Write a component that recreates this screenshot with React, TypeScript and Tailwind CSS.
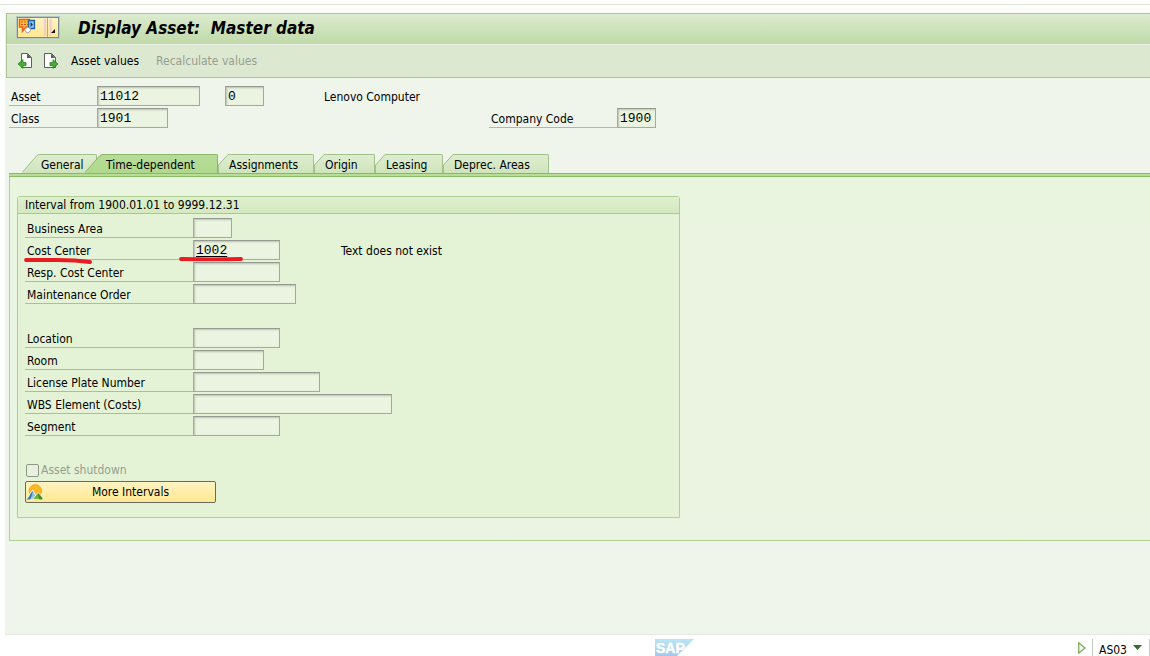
import React from "react";

type Field = { id: string; label: string; width: string; value?: string; note?: string };

const intervalFields: Field[] = [
  { id: "business-area", label: "Business Area", width: "w-[39px]" },
  { id: "cost-center", label: "Cost Center", width: "w-[87px]", value: "1002", note: "Text does not exist" },
  { id: "resp-cost-center", label: "Resp. Cost Center", width: "w-[87px]" },
  { id: "maintenance-order", label: "Maintenance Order", width: "w-[103px]" },
];

const locationFields: Field[] = [
  { id: "location", label: "Location", width: "w-[87px]" },
  { id: "room", label: "Room", width: "w-[71px]" },
  { id: "license-plate", label: "License Plate Number", width: "w-[127px]" },
  { id: "wbs-element", label: "WBS Element (Costs)", width: "w-[199px]" },
  { id: "segment", label: "Segment", width: "w-[87px]" },
];

const inputClass =
  "h-5 shrink-0 border border-[#a3aa9e] border-t-[#969b92] bg-[#eaf4e0] px-[2px] font-['Liberation_Mono',monospace] text-[13px] leading-4 text-black outline-none shadow-[inset_1px_1px_2px_#b9c0b2]";

function TabEdge({ kind }: { kind: "first" | "active" | "plain" }) {
  if (kind === "plain") {
    return (
      <svg className="block h-[19px] w-[11px] shrink-0" viewBox="0 0 11 19" aria-hidden="true">
        <path d="M0 11 L10 0 H11 V19 H0Z" fill="url(#tab-plain)" />
        <path d="M0.5 19 V11 L10 0.5 H11" fill="none" stroke="#a3c18a" />
      </svg>
    );
  }
  const active = kind === "active";
  return (
    <svg className="block h-[19px] w-[19px] shrink-0" viewBox="0 0 19 19" aria-hidden="true">
      <path d="M0 19 L15 1 L18 0 H19 V19Z" fill={active ? "url(#tab-active)" : "url(#tab-plain)"} />
      <path d="M0 18.5 L14.5 2 Q16 0.5 18 0.5 H19" fill="none" stroke={active ? "#8bb768" : "#a3c18a"} />
    </svg>
  );
}

function Tab({ label, kind, className }: { label: string; kind: "first" | "active" | "plain"; className: string }) {
  const active = kind === "active";
  return (
    <button type="button" role="tab" aria-selected={active} className={`flex h-[19px] ${className}`}>
      <TabEdge kind={kind} />
      <span
        className={`h-[19px] flex-1 rounded-tr-[2px] border-t border-r text-left leading-[20px] whitespace-nowrap ${
          active
            ? "border-[#8bb768] bg-linear-to-b from-[#b7dc98] to-[#afd98d] pl-[2px]"
            : "border-[#a3c18a] bg-linear-to-b from-[#deeed0] to-[#cfe4bb]"
        }`}
      >
        {label}
      </span>
    </button>
  );
}

function FieldRow({ field }: { field: Field }) {
  return (
    <div className="relative flex h-[22px] items-start">
      <label htmlFor={field.id} className="h-5 w-[168px] shrink-0 border-b border-[#b0b9a8] pl-[2px] leading-[23px]">
        {field.label}
      </label>
      <input
        id={field.id}
        readOnly
        defaultValue={field.value ?? ""}
        className={`${inputClass} ${field.width} ${field.value ? "underline underline-offset-2" : ""}`}
      />
      {field.note && <span className="ml-[61px] leading-[23px]">{field.note}</span>}
      {field.value && (
        <svg className="pointer-events-none absolute top-4 left-[-2px] h-2 w-[222px]" viewBox="0 0 222 8" aria-hidden="true">
          <path d="M3 4 Q18 4 35 4 T67 6" fill="none" stroke="#e81c22" strokeWidth="3.8" strokeLinecap="round" />
          <path d="M158 3 Q190 3.6 218 3" fill="none" stroke="#e81c22" strokeWidth="3.8" strokeLinecap="round" />
        </svg>
      )}
    </div>
  );
}

function PageIcon({ next }: { next?: boolean }) {
  return (
    <svg className="block h-4 w-4" viewBox="0 0 16 16" aria-hidden="true">
      <path d={next ? "M1.5 .5H8.5L12.5 4.5V14.5H1.5Z" : "M4.5 .5H10.5L14.5 4.5V14.5H4.5Z"} fill="#fff" stroke="#5c5f5c" />
      <path d={next ? "M8 .5V5H12.5Z" : "M10 .5V5H14.5Z"} fill="#5c5f5c" />
      <path
        d={next ? "M7 9.5H10V6.7L15 11L10 15.3V12.7H7Z" : "M9 9.5H6V6.7L1 11L6 15.3V12.7H9Z"}
        fill="#45ae35"
        stroke="#2c7d22"
        strokeWidth=".8"
      />
    </svg>
  );
}

export default function App() {
  return (
    <div className="flex min-h-screen flex-col bg-white font-['DejaVu_Sans_Condensed','Noto_Sans',sans-serif] text-[12px] text-black">
      <svg className="absolute h-0 w-0" aria-hidden="true">
        <defs>
          <linearGradient id="tab-plain" x1="0" y1="0" x2="0" y2="1">
            <stop offset="0" stopColor="#deeed0" />
            <stop offset="1" stopColor="#cfe4bb" />
          </linearGradient>
          <linearGradient id="tab-active" x1="0" y1="0" x2="0" y2="1">
            <stop offset="0" stopColor="#b7dc98" />
            <stop offset="1" stopColor="#afd98d" />
          </linearGradient>
        </defs>
      </svg>
      <div className="mt-1 h-[9px] border-t border-[#dfe9da] bg-linear-to-b from-white to-[#f7faf5]" />

      <div className="ml-[5px] flex flex-1 flex-col border-b border-[#e3ebde] bg-[#eff5eb]">
        <header className="ml-px flex h-[31px] items-center border-t border-l border-[#a9c497] bg-linear-to-b from-[#dcebcf] to-[#c0d9a9] pb-[3px] pl-[10px]">
          <button
            type="button"
            aria-label="Services for object"
            className="flex h-[21px] w-[42px] border border-[#7d8794] bg-linear-to-b from-[#fff3c4] to-[#ffe88f] outline outline-[#b5c9c6]"
          >
            <svg className="block h-[19px] w-10" viewBox="0 0 40 19" aria-hidden="true">
              <path d="M1.5 1.5H11.5V9H8L4.5 13V9H1.5Z" fill="#ffc23a" stroke="#e8641b" strokeWidth="1.6" />
              <path d="M3 4H10M3 6.5H10" stroke="#d9531a" strokeDasharray="2 1" />
              <path d="M10.5 2.5H16.5V10.5H10.5Z" fill="#8fc8ef" stroke="#23629d" strokeWidth="1.3" />
              <path d="M12.5 4L15 6.5L12.5 9Z" fill="#123b68" />
              <path d="M6.5 12L9.5 9L13 11L11.5 14L9 15Z" fill="#fff" stroke="#8994a0" strokeWidth=".8" />
              <path d="M27 1V18M32.5 1V18" stroke="#f4c7d4" strokeWidth="2" />
              <path d="M29.5 0V19" stroke="#b9a67c" />
              <path d="M37 11V15H33Z" fill="#111" />
            </svg>
          </button>
          <h1 className="ml-[19px] text-[17px] leading-5 font-bold whitespace-pre italic">Display Asset:  Master data</h1>
        </header>

        <div className="ml-px flex h-[34px] items-center border-t border-b border-l border-[#a9c497] border-t-[#edf4e7] bg-[#dde8d0] pl-[10px]">
          <button type="button" aria-label="Previous asset" className="pb-px"><PageIcon /></button>
          <button type="button" aria-label="Next asset" className="ml-[10px] pb-px"><PageIcon next /></button>
          <button type="button" className="ml-[12px]">Asset values</button>
          <button type="button" disabled className="ml-[17px] text-[#969e90]">Recalculate values</button>
        </div>

        <section className="mt-2 ml-1">
          <div className="flex h-[22px] items-start">
            <label htmlFor="asset" className="h-5 w-[88px] border-b border-[#b0b9a8] pl-[2px] leading-[23px]">Asset</label>
            <input id="asset" readOnly defaultValue="11012" className={`${inputClass} w-[103px]`} />
            <input aria-label="Asset subnumber" readOnly defaultValue="0" className={`${inputClass} ml-[25px] w-[39px]`} />
            <span className="ml-[60px] leading-[23px]">Lenovo Computer</span>
          </div>
          <div className="flex h-[22px] items-start">
            <label htmlFor="class" className="h-5 w-[88px] border-b border-[#b0b9a8] pl-[2px] leading-[23px]">Class</label>
            <input id="class" readOnly defaultValue="1901" className={`${inputClass} w-[71px]`} />
            <label htmlFor="company" className="ml-[321px] h-5 w-32 border-b border-[#b0b9a8] pl-[2px] leading-[23px]">Company Code</label>
            <input id="company" readOnly defaultValue="1900" className={`${inputClass} w-[39px]`} />
          </div>
        </section>

        <section className="mt-6 ml-1">
          <div role="tablist" className="flex pl-[13px]">
            <Tab label="General" kind="first" className="w-[75px]" />
            <Tab label="Time-dependent" kind="active" className="z-10 -ml-[12px] w-[133px]" />
            <Tab label="Assignments" kind="plain" className="w-[96px]" />
            <Tab label="Origin" kind="plain" className="w-[61px]" />
            <Tab label="Leasing" kind="plain" className="w-[68px]" />
            <Tab label="Deprec. Areas" kind="plain" className="w-[106px]" />
          </div>
          <div className="h-1 border-t border-b border-[#8bb768] bg-[#b7dd98]" />
          <div className="border-b border-l border-[#afd093] bg-linear-to-b from-[#eaf5e0] to-[#ebf4e2] pt-[19px] pb-[22px] pl-[7px]">
            <fieldset className="w-[663px] max-w-full rounded-t-[3px] border border-[#afd093] bg-[#e4f3d6] pb-[14px]">
              <h2 className="h-[17px] border-b border-[#a8cb8a] bg-linear-to-b from-[#dfefd1] to-[#d3e9be] pl-[7px] leading-4">
                Interval from 1900.01.01 to 9999.12.31
              </h2>
              <div className="pt-1 pl-[7px]">
                {intervalFields.map((f) => <FieldRow key={f.id} field={f} />)}
                <div className="mt-[22px]">
                  {locationFields.map((f) => <FieldRow key={f.id} field={f} />)}
                </div>
                <label className="mt-[22px] flex h-5 items-center text-[#969e90]">
                  <input type="checkbox" disabled className="mr-[2px] ml-px h-[13px] w-[13px] appearance-none rounded-[2px] border border-[#8e978a] bg-[#e8f1df]" />
                  Asset shutdown
                </label>
                <button
                  type="button"
                  className="mt-px flex h-[22px] w-[191px] items-center rounded-[2px] border border-[#6b6a5e] bg-linear-to-b from-[#fff3c3] to-[#ffe88f]"
                >
                  <svg className="block h-4 w-[17px] shrink-0" viewBox="0 0 17 16" aria-hidden="true">
                    <circle cx="9.3" cy="6.8" r="6.2" fill="#ffb81e" stroke="#f59a1c" strokeWidth=".8" />
                    <path d="M0 15.4C2 15 4 8 6.8 6L11.5 15.4Z" fill="#8fc3e6" stroke="#fff" strokeWidth=".8" />
                    <path d="M.5 15.4C3 14.5 4.6 9 6.8 7L6 11L4.2 15.4Z" fill="#3a78ad" />
                    <path d="M6.5 15.4L12 8.3L16.6 13.5V15.4Z" fill="#69b42d" stroke="#fff" strokeWidth=".8" />
                    <path d="M12 9L16.4 14V15.4H13.2Z" fill="#3f8c28" />
                  </svg>
                  <span className="flex-1 pl-[3px] text-center">More Intervals</span>
                </button>
              </div>
            </fieldset>
          </div>
        </section>
      </div>

      <footer className="flex h-[21px] shrink-0 items-end">
        <div className="flex-1" />
        <svg className="block h-[17px] w-10 shrink-0" viewBox="0 0 40 17" role="img" aria-label="SAP">
          <defs>
            <linearGradient id="logo" x1="0" y1="0" x2="0" y2="1">
              <stop offset="0" stopColor="#b9e6f6" />
              <stop offset="1" stopColor="#a5c8ea" />
            </linearGradient>
          </defs>
          <path d="M0 0H39L22 17H0Z" fill="url(#logo)" />
          <text x="1" y="14" fill="#fff" stroke="#fff" strokeWidth=".5" fontFamily="Liberation Sans, sans-serif" fontWeight="700" fontSize="14">SAP</text>
        </svg>
        <div className="flex w-[455px] items-center justify-end self-stretch">
          <svg className="mt-1 block h-3 w-2" viewBox="0 0 8 12" aria-hidden="true">
            <path d="M.7 .8V11.2L7 6Z" fill="#f1f7e9" stroke="#79a65c" strokeWidth="1.2" />
          </svg>
          <span className="mt-1 ml-[6px] h-[17px] w-px bg-[#c9cdc7]" />
          <button type="button" className="mt-2 ml-[6px] flex items-center leading-4">
            AS03
            <svg className="mb-1 ml-[6px] block h-[5px] w-[9px]" viewBox="0 0 9 5" aria-hidden="true">
              <path d="M0 0H9L4.5 5Z" fill="#3b6a2d" />
            </svg>
          </button>
          <span className="mt-1 ml-[7px] h-[17px] w-px bg-[#c9cdc7]" />
        </div>
      </footer>
    </div>
  );
}
